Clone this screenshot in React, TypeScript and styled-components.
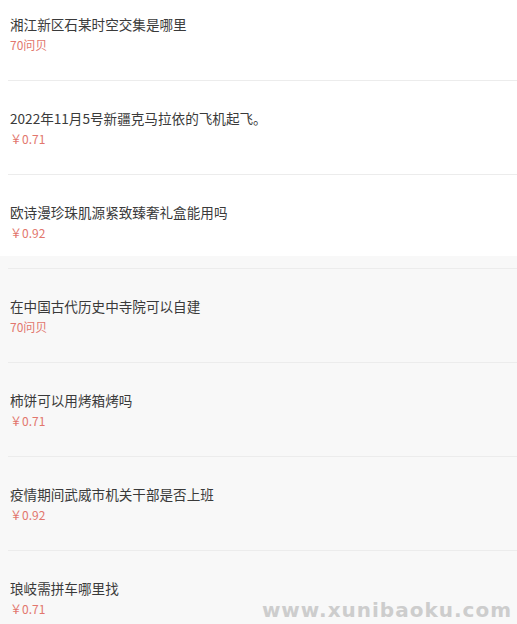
import React from "react";
import styled, { createGlobalStyle } from "styled-components";

const GlobalStyle = createGlobalStyle`
    html, body {
        margin: 0;
        padding: 0;
    }
    body {
        background: linear-gradient(#ffffff 0 256px, #f8f8f8 256px);
        font-family: "Noto Sans CJK SC", "Noto Sans", sans-serif;
        min-height: 624px;
        overflow: hidden;
    }
`

const Page = styled.div`
    position: relative;
    height: 624px;
    overflow: hidden;
`

const List = styled.div`
    display: flex;
    flex-direction: column;
    margin-top: -13px;
`

const Item = styled.div`
    height: 94px;
    box-sizing: border-box;
    padding: 27px 0 0 2px;
    margin-left: 8px;
    border-bottom: 1px solid #ececec;
`

const Title = styled.div`
    font-size: 13.6px;
    line-height: 20px;
    color: #3a3a3a;
    white-space: nowrap;
`

const Price = styled.div`
    margin-top: 1px;
    font-size: 12px;
    line-height: 20px;
    color: #e2766d;
`

const Watermark = styled.div`
    position: absolute;
    right: 5px;
    bottom: 1px;
    font-family: "DejaVu Sans", "Liberation Sans", sans-serif;
    font-weight: bold;
    font-size: 20px;
    letter-spacing: 1px;
    color: #cdcdcd;
    line-height: 26px;
`

const questions = [
    { title: "湘江新区石某时空交集是哪里", price: "70问贝" },
    { title: "2022年11月5号新疆克马拉依的飞机起飞。", price: "￥0.71" },
    { title: "欧诗漫珍珠肌源紧致臻奢礼盒能用吗", price: "￥0.92" },
    { title: "在中国古代历史中寺院可以自建", price: "70问贝" },
    { title: "柿饼可以用烤箱烤吗", price: "￥0.71" },
    { title: "疫情期间武威市机关干部是否上班", price: "￥0.92" },
    { title: "琅岐需拼车哪里找", price: "￥0.71" },
];

function App(){
    return(
        <Page>
            <GlobalStyle />
            <List>
                {questions.map(q => (
                    <Item key={q.title}>
                        <Title>{q.title}</Title>
                        <Price>{q.price}</Price>
                    </Item>
                ))}
            </List>
            <Watermark>www.xunibaoku.com</Watermark>
        </Page>
    )
}

export default App;
